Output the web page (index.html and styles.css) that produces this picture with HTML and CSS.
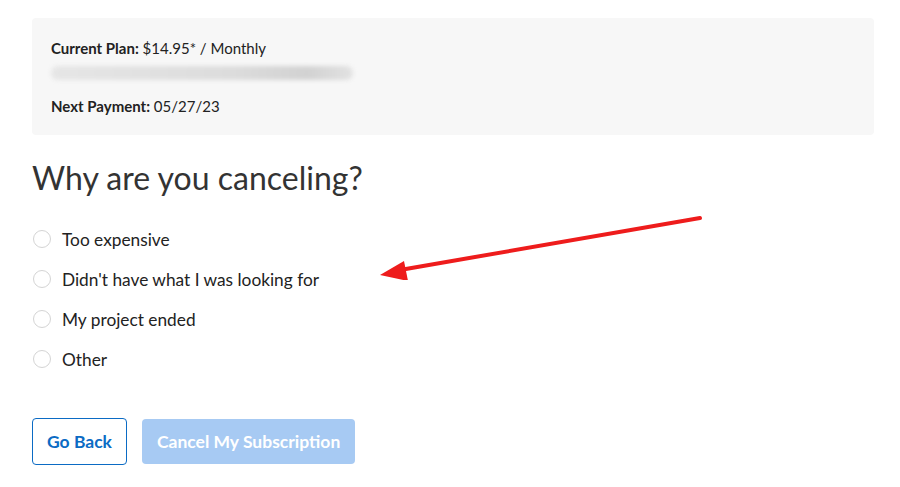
FILE: index.html
```html
<!DOCTYPE html>
<html lang="en">
<head>
  <meta charset="UTF-8" />
  <meta name="viewport" content="width=device-width, initial-scale=1.0" />
  <title>Cancel Subscription</title>
  <link rel="stylesheet" href="styles.css">
</head>
<body>

<main class="page">
  <section class="plan">
    <p class="plan-line"><b>Current Plan:</b> $14.95* / Monthly</p>
    <div class="plan-blur"></div>
    <p class="plan-line"><b>Next Payment:</b> 05/27/23</p>
  </section>

  <h1 class="title">Why are you canceling?</h1>

  <form class="reasons">
    <label class="reason"><input type="radio" name="reason"><span class="dot"></span>Too expensive</label>
    <label class="reason"><input type="radio" name="reason"><span class="dot"></span>Didn't have what I was looking for</label>
    <label class="reason"><input type="radio" name="reason"><span class="dot"></span>My project ended</label>
    <label class="reason"><input type="radio" name="reason"><span class="dot"></span>Other</label>

    <div class="actions">
      <button type="button" class="btn btn-back">Go Back</button>
      <button type="submit" class="btn btn-cancel" disabled>Cancel My Subscription</button>
    </div>
  </form>

  <svg class="arrow" width="340" height="80" viewBox="0 0 340 80">
    <line x1="330" y1="18" x2="30" y2="70" stroke="#ee1c1c" stroke-width="4" stroke-linecap="round"/>
    <polygon points="10,75 34,61 38,81" fill="#ee1c1c"/>
  </svg>
</main>

</body>
</html>
```

FILE: styles.css
```css
body {
  margin: 0;
  background: #fff;
  font-family: 'Lato', 'Liberation Sans', sans-serif;
  color: #222;
}
.page {
  position: relative;
  padding: 18px 26px 0 32px;
}
.plan {
  background: #f7f7f7;
  border-radius: 4px;
  padding: 21px 19px 19px;
  height: 77px;
}
.plan-line {
  margin: 0;
  font-size: 15px;
  line-height: 18px;
  color: #222;
}
.plan-blur {
  width: 302px;
  height: 14px;
  margin: 9px 0 17px;
  background: linear-gradient(90deg, #e6e6e6, #dcdcdc 60%, #d2d2d2 85%, #e2e2e2);
  border-radius: 7px;
  filter: blur(2px);
}
.title {
  margin: 23px 0 21px;
  font-size: 32px;
  font-weight: 400;
  color: #333;
  line-height: 40px;
}
.reasons {
  display: flex;
  flex-direction: column;
}
.reason {
  display: flex;
  align-items: center;
  height: 40px;
  font-size: 17.3px;
  color: #222;
}
.reason input {
  display: none;
}
.dot {
  width: 16px;
  height: 16px;
  border: 1px solid #d4d4d4;
  border-radius: 50%;
  margin: 0 11px 0 1px;
  background: #fff;
}
.actions {
  display: flex;
  gap: 15px;
  margin-top: 39px;
  align-items: center;
}
.btn {
  font-family: inherit;
  font-size: 17.5px;
  font-weight: 700;
  border-radius: 4px;
  height: 47px;
  padding: 0 14px;
}
.btn-back {
  background: #fff;
  color: #0b6bc4;
  border: 1px solid #0b6bc4;
}
.btn-cancel {
  background: #a7caf3;
  color: #fff;
  border: none;
  height: 45px;
  padding: 0 15px;
}
.arrow {
  position: absolute;
  left: 370px;
  top: 200px;
}
```
